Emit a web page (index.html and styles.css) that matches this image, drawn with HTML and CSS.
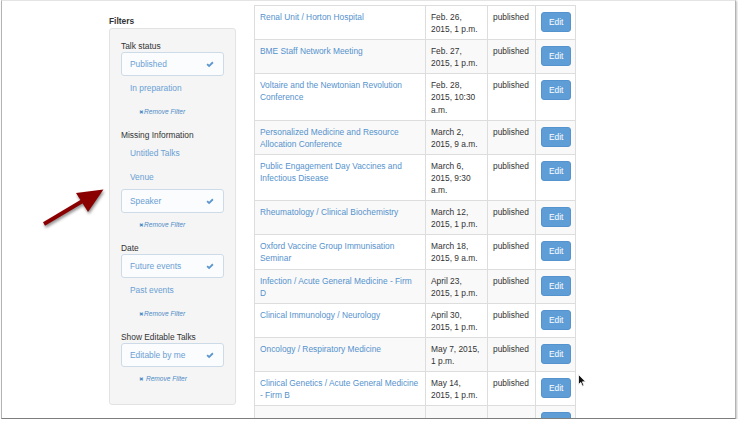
FILE: index.html
```html
<!DOCTYPE html>
<html>
<head>
<meta charset="utf-8">
<link rel="stylesheet" href="styles.css">
</head>
<body>
<div class="frame">
  <div class="page">
    <aside class="sidebar">
      <h5 class="sidebar-title">Filters</h5>
      <div class="well">
        <div class="group">
          <div class="group-label">Talk status</div>
          <a class="item active">Published<svg class="check" viewBox="0 0 10 8"><path d="M0.6 4.2 L2.2 2.6 L3.9 4.3 L7.8 0.4 L9.4 2 L3.9 7.5 Z"/></svg></a>
          <a class="item">In preparation</a>
          <a class="remove"><span class="x">✖</span>Remove Filter</a>
        </div>
        <div class="group">
          <div class="group-label">Missing Information</div>
          <a class="item">Untitled Talks</a>
          <a class="item">Venue</a>
          <a class="item active">Speaker<svg class="check" viewBox="0 0 10 8"><path d="M0.6 4.2 L2.2 2.6 L3.9 4.3 L7.8 0.4 L9.4 2 L3.9 7.5 Z"/></svg></a>
          <a class="remove"><span class="x">✖</span>Remove Filter</a>
        </div>
        <div class="group">
          <div class="group-label">Date</div>
          <a class="item active">Future events<svg class="check" viewBox="0 0 10 8"><path d="M0.6 4.2 L2.2 2.6 L3.9 4.3 L7.8 0.4 L9.4 2 L3.9 7.5 Z"/></svg></a>
          <a class="item">Past events</a>
          <a class="remove"><span class="x">✖</span>Remove Filter</a>
        </div>
        <div class="group">
          <div class="group-label">Show Editable Talks</div>
          <a class="item active">Editable by me<svg class="check" viewBox="0 0 10 8"><path d="M0.6 4.2 L2.2 2.6 L3.9 4.3 L7.8 0.4 L9.4 2 L3.9 7.5 Z"/></svg></a>
          <a class="remove"><span class="x">✖</span> Remove Filter</a>
        </div>
      </div>
    </aside>
    <main class="main">
      <table class="talks">
        <colgroup>
          <col class="c-title"><col class="c-date"><col class="c-status"><col class="c-edit">
        </colgroup>
        <tbody>
          <tr><td><a>Renal Unit / Horton Hospital</a></td><td>Feb. 26,<br>2015, 1 p.m.</td><td>published</td><td><a class="btn">Edit</a></td></tr>
          <tr><td><a>BME Staff Network Meeting</a></td><td>Feb. 27,<br>2015, 1 p.m.</td><td>published</td><td><a class="btn">Edit</a></td></tr>
          <tr><td><a>Voltaire and the Newtonian Revolution<br>Conference</a></td><td>Feb. 28,<br>2015, 10:30<br>a.m.</td><td>published</td><td><a class="btn">Edit</a></td></tr>
          <tr><td><a>Personalized Medicine and Resource<br>Allocation Conference</a></td><td>March 2,<br>2015, 9 a.m.</td><td>published</td><td><a class="btn">Edit</a></td></tr>
          <tr><td><a>Public Engagement Day Vaccines and<br>Infectious Disease</a></td><td>March 6,<br>2015, 9:30<br>a.m.</td><td>published</td><td><a class="btn">Edit</a></td></tr>
          <tr><td><a>Rheumatology / Clinical Biochemistry</a></td><td>March 12,<br>2015, 1 p.m.</td><td>published</td><td><a class="btn">Edit</a></td></tr>
          <tr><td><a>Oxford Vaccine Group Immunisation<br>Seminar</a></td><td>March 18,<br>2015, 9 a.m.</td><td>published</td><td><a class="btn">Edit</a></td></tr>
          <tr><td><a>Infection / Acute General Medicine - Firm<br>D</a></td><td>April 23,<br>2015, 1 p.m.</td><td>published</td><td><a class="btn">Edit</a></td></tr>
          <tr><td><a>Clinical Immunology / Neurology</a></td><td>April 30,<br>2015, 1 p.m.</td><td>published</td><td><a class="btn">Edit</a></td></tr>
          <tr><td><a>Oncology / Respiratory Medicine</a></td><td>May 7, 2015,<br>1 p.m.</td><td>published</td><td><a class="btn">Edit</a></td></tr>
          <tr><td><a>Clinical Genetics / Acute General Medicine<br>- Firm B</a></td><td>May 14,<br>2015, 1 p.m.</td><td>published</td><td><a class="btn">Edit</a></td></tr>
          <tr class="row-cut"><td></td><td></td><td></td><td><span class="btn btn-blank"></span></td></tr>
        </tbody>
      </table>
    </main>
  </div>
  <svg class="arrow" width="110" height="60" viewBox="0 0 110 60">
    <line x1="42" y1="44" x2="84" y2="19" />
    <polygon points="101.5,9.5 74,13 86,32" />
  </svg>
  <svg class="cursor" width="10" height="14" viewBox="0 0 10 14">
    <path d="M0.5 0.5 L0.5 10.5 L2.8 8.4 L4.5 12.2 L6 11.5 L4.4 7.8 L7.6 7.8 Z"/>
  </svg>
</div>
</body>
</html>
```
FILE: styles.css
```css
* { box-sizing: border-box; }
html, body { margin: 0; padding: 0; background: #ffffff; }
body {
  font-family: "Liberation Sans", Arial, sans-serif;
  font-size: 8.4px;
  line-height: 12.1px;
  color: #333333;
}
a { color: #5592cd; text-decoration: none; }

.frame {
  position: relative;
  margin-left: 1px;
  width: 735px;
  height: 419px;
  border-top: 1px solid #e4e4e4;
  border-left: 1px solid #b3b3b3;
  border-right: 1px solid #b3b3b3;
  border-bottom: 1px solid #7d7d7d;
  box-shadow: 1px 1px 2px rgba(0,0,0,0.25);
  overflow: hidden;
  background: #ffffff;
}
.page {
  display: flex;
  align-items: flex-start;
  gap: 18px;
  padding-left: 107px;
}

/* Sidebar */
.sidebar { width: 127px; flex: none; }
.sidebar-title {
  margin: 14px 0 1px;
  font-size: 8.4px;
  line-height: 12px;
  font-weight: bold;
  color: #333;
}
.well {
  background: #f5f5f5;
  border: 1px solid #e3e3e3;
  border-radius: 3px;
  padding: 11px 11px 8px;
}
.group { display: flex; flex-direction: column; }
.group-label { line-height: 12px; color: #333; }
.item {
  display: flex;
  align-items: center;
  justify-content: space-between;
  height: 24px;
  padding: 0 9px 0 8px;
  border: 1px solid transparent;
  border-radius: 3px;
  color: #6a9fd4;
}
.item.active {
  background: #fbfcfd;
  border-color: #cddbe9;
}
.check { width: 8px; height: 7px; fill: #5b97d0; }
.remove {
  margin: 6px 0 11px 18px;
  line-height: 12px;
  font-size: 6.6px;
  font-style: italic;
  color: #4f8bc6;
}
.remove .x {
  font-family: "DejaVu Sans", sans-serif;
  font-style: normal;
  font-size: 5.5px;
  margin-right: 0.5px;
}

/* Table */
.main { flex: none; padding-top: 4px; }
.talks {
  table-layout: fixed;
  width: 321px;
  border-collapse: collapse;
  border: 1px solid #dddddd;
}
.c-title { width: 171px; }
.c-date { width: 62px; }
.c-status { width: 48px; }
.c-edit { width: 40px; }
.talks td {
  border: 1px solid #dddddd;
  padding: 5px 4px 4px 5px;
  vertical-align: top;
  line-height: 12.1px;
}
.talks tr:nth-child(even) td { background: #f9f9f9; }
.btn {
  display: inline-block;
  margin-top: 1px;
  padding: 4px 7px;
  line-height: 10px;
  font-size: 8.4px;
  color: #ffffff;
  background: #5e9dd6;
  border: 1px solid #5593cf;
  border-radius: 3px;
  width: 30px;
  text-align: center;
}
.btn-blank { height: 20px; vertical-align: top; }
.row-cut td { height: 34px; }

/* Overlays */
.arrow {
  position: absolute;
  left: 0;
  top: 179px;
  filter: drop-shadow(1px 2px 1.5px rgba(0,0,0,0.45));
}
.arrow line { stroke: #8a0000; stroke-width: 4; }
.arrow polygon { fill: #8a0000; }
.cursor {
  position: absolute;
  left: 576px;
  top: 373px;
}
.cursor path { fill: #111; stroke: #fff; stroke-width: 0.8; }
```
